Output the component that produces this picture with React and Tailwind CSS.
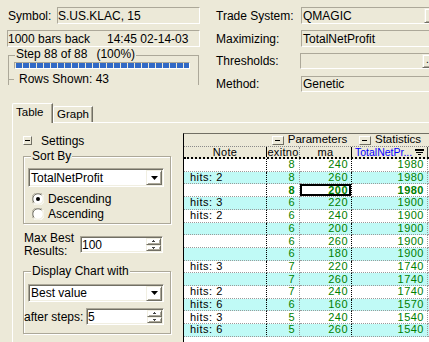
import React from "react";

const sunken1 =
  "border border-t-[#aca899] border-l-[#aca899] border-b-white border-r-white";
const sunken2 =
  "border border-t-[#aca899] border-l-[#aca899] border-b-white border-r-white shadow-[inset_1px_1px_0_#716f64,inset_-1px_-1px_0_#f1efe2]";
const raised =
  "border border-t-[#f1efe2] border-l-[#f1efe2] border-b-[#716f64] border-r-[#716f64] shadow-[inset_1px_1px_0_#ffffff,inset_-1px_-1px_0_#aca899]";

function Group({ label, className, labelClass, children }) {
  return (
    <div
      className={`border border-[#aca899] shadow-[inset_1px_1px_0_#ffffff,1px_1px_0_#ffffff] flex flex-col ${className}`}
    >
      <div
        className={`-mt-[8px] h-[14px] self-start px-[1px] bg-[#ece9d8] flex items-center ${labelClass}`}
      >
        {label}
      </div>
      {children}
    </div>
  );
}

function DownTri() {
  return (
    <svg width="7" height="4" viewBox="0 0 7 4">
      <path d="M0 0H7L3.5 4Z" fill="#000" />
    </svg>
  );
}

function Combo({ value, className }) {
  return (
    <div className={`${sunken2} bg-white flex items-center ${className}`}>
      <span className="flex-1 pl-[2px]">{value}</span>
      <div
        className={`${raised} w-[16px] h-[15px] mr-[1px] flex items-center justify-center`}
      >
        <DownTri />
      </div>
    </div>
  );
}

function Spin({ value, className }) {
  return (
    <div className={`${sunken2} bg-white h-[17px] flex ${className}`}>
      <span className="flex-1 pl-[1px] flex items-center">{value}</span>
      <div className="w-[16px] flex flex-col py-[1px] pr-[1px]">
        <div className={`${raised} flex-1 flex items-center justify-center`}>
          <svg width="3" height="2" viewBox="0 0 3 2">
            <path d="M1 0H2V1H3V2H0V1H1Z" fill="#444" />
          </svg>
        </div>
        <div className={`${raised} flex-1 flex items-center justify-center`}>
          <svg width="3" height="2" viewBox="0 0 3 2">
            <path d="M0 0H3V1H2V2H1V1H0Z" fill="#444" />
          </svg>
        </div>
      </div>
    </div>
  );
}

function Radio({ checked }) {
  return (
    <svg width="12" height="12" viewBox="0 0 12 12">
      <circle cx="6" cy="6" r="5.5" fill="#ffffff" />
      <path d="M1.5 10.5A6 6 0 0 1 10.5 1.5" stroke="#aca899" strokeWidth="1" fill="none" />
      <path d="M2.3 9.7A5 5 0 0 1 9.7 2.3" stroke="#716f64" strokeWidth="1" fill="none" />
      <path d="M10.5 1.5A6 6 0 0 1 1.5 10.5" stroke="#ffffff" strokeWidth="1" fill="none" />
      <path d="M9.7 2.3A5 5 0 0 1 2.3 9.7" stroke="#f1efe2" strokeWidth="1" fill="none" />
      {checked && <circle cx="6" cy="6" r="2" fill="#000" />}
    </svg>
  );
}

function TopRow({ label, children, className = "" }) {
  return (
    <div className={`flex items-center ${className}`}>
      <span className="w-[85px] shrink-0">{label}</span>
      {children}
    </div>
  );
}

const rows = [
  ["", 8, 240, 1980],
  ["hits: 2", 8, 260, 1980],
  ["", 8, 200, 1980, true],
  ["hits: 3", 6, 220, 1900],
  ["hits: 2", 6, 240, 1900],
  ["", 6, 200, 1900],
  ["", 6, 260, 1900],
  ["", 6, 180, 1900],
  ["hits: 3", 7, 220, 1740],
  ["", 7, 260, 1740],
  ["hits: 2", 7, 240, 1740],
  ["hits: 6", 6, 160, 1570],
  ["hits: 3", 5, 240, 1540],
  ["hits: 6", 5, 260, 1540],
];

export default function App() {
  const blocks = Array.from({ length: 25 });
  return (
    <div className="w-[429px] h-[342px] overflow-hidden bg-[#ece9d8] text-[12px] leading-none text-black font-['Liberation_Sans',Arial,sans-serif] flex flex-col">
      {/* top area */}
      <div className="h-[103px] flex pt-[7px] shrink-0">
        <div className="ml-[7px] w-[193px] shrink-0 flex flex-col">
          <div className="flex items-center h-[17px]">
            <span className="ml-[1px] w-[49px]">Symbol:</span>
            <div className={`${sunken1} w-[143px] h-[17px] flex items-center`}>
              S.US.KLAC, 15
            </div>
          </div>
          <div className={`${sunken1} mt-[6px] w-[193px] h-[17px] flex items-center`}>
            <span className="w-[99px]">1000 bars back</span>
            <span>14:45 02-14-03</span>
          </div>
          <div className="mt-[8px] ml-[1px] w-[191px] h-[30px] border border-b-0 border-[#aca899] flex flex-col">
            <div className="-mt-[8px] ml-[6px] h-[14px] self-start px-[1px] bg-[#ece9d8] flex items-center">
              <span>Step 88 of 88</span>
              <span className="ml-[9px]">(100%)</span>
            </div>
            <div
              className={`mt-[2px] ml-[5px] w-[176px] h-[10px] ${sunken1} flex items-center gap-[1px] pl-[1px] overflow-hidden`}
            >
              {blocks.map((_, i) => (
                <div key={i} className="w-[6px] h-[6px] shrink-0 bg-[#3169c6]" />
              ))}
            </div>
            <div className="mt-[4px] -ml-[1px] h-[13px] flex items-center">
              <div className="w-[6px] h-[1px] bg-[#aca899]" />
              <span className="ml-[5px] bg-[#ece9d8]">Rows Shown: 43</span>
            </div>
          </div>
        </div>
        <div className="ml-[16px] flex-1 flex flex-col">
          <TopRow label="Trade System:" className="h-[17px]">
            <div className={`${sunken1} h-[17px] w-[140px] shrink-0 flex items-center`}>
              <span className="w-[122px] pl-[1px] shrink-0">QMAGIC</span>
              <div className={`${raised} w-[14px] h-[15px] shrink-0`} />
            </div>
          </TopRow>
          <TopRow label="Maximizing:" className="h-[17px] mt-[6px]">
            <div className={`${sunken1} h-[17px] w-[140px] shrink-0 flex items-center pl-[1px]`}>
              TotalNetProfit
            </div>
          </TopRow>
          <TopRow label="Thresholds:" className="h-[16px] mt-[6px]">
            <div className={`${sunken1} -ml-[1px] h-[16px] w-[140px] shrink-0 flex items-center`}>
              <span className="w-[121px] shrink-0" />
              <div className={`${raised} w-[14px] h-[14px] shrink-0 flex items-end pl-[3px] pb-[2px] text-[10px]`}>
                .
              </div>
            </div>
          </TopRow>
          <TopRow label="Method:" className="h-[16px] mt-[7px]">
            <div className={`${sunken1} h-[16px] w-[140px] shrink-0 flex items-center pl-[1px]`}>
              Genetic
            </div>
          </TopRow>
        </div>
      </div>

      {/* tabs */}
      <div className="flex h-[19px] pl-[12px] items-end shrink-0 text-[11.5px]">
        <div className="relative z-10 -mb-[1px] h-[20px] w-[41px] bg-[#ece9d8] border-l border-t border-white border-r border-r-[#716f64] rounded-tl-[2px] shadow-[inset_-1px_0_0_#aca899] flex items-center pl-[3px] pb-[2px]">
          Table
        </div>
        <div className="h-[16px] w-[40px] border-l border-t border-white border-r border-r-[#716f64] rounded-tl-[2px] shadow-[inset_-1px_0_0_#aca899] flex items-center pl-[3px]">
          Graph
        </div>
      </div>

      {/* panel */}
      <div className="flex-1 ml-[12px] border-t border-l border-white flex min-h-0">
        <div className="ml-[10px] w-[148px] shrink-0 flex flex-col">
          <div className="mt-[13px] h-[9px] flex items-center">
            <div className="w-[9px] h-[9px] border border-t-white border-l-white border-b-[#716f64] border-r-[#716f64] flex items-center justify-center">
              <div className="w-[5px] h-[1px] bg-black" />
            </div>
            <span className="ml-[9px]">Settings</span>
          </div>

          <Group label="Sort By" className="mt-[11px] h-[68px]" labelClass="ml-[7px]">
            <Combo value="TotalNetProfit" className="mt-[5px] ml-[4px] w-[136px] h-[19px]" />
            <div className="mt-[5px] ml-[8px] h-[13px] flex items-center">
              <Radio checked />
              <span className="ml-[4px]">Descending</span>
            </div>
            <div className="mt-[2px] ml-[8px] h-[13px] flex items-center">
              <Radio />
              <span className="ml-[4px]">Ascending</span>
            </div>
          </Group>

          <div className="mt-[8px] flex">
            <div className="ml-[1px] w-[56px] leading-[13px]">
              Max Best
              <br />
              Results:
            </div>
            <Spin value="100" className="mt-[4px] w-[83px]" />
          </div>

          <Group label="Display Chart with" className="mt-[13px] h-[63px]" labelClass="ml-[7px]">
            <Combo value="Best value" className="mt-[6px] ml-[4px] w-[136px] h-[18px]" />
            <div className="mt-[6px] flex items-center">
              <span className="w-[62px]">after steps:</span>
              <Spin value="5" className="w-[78px]" />
            </div>
          </Group>
        </div>

        {/* grid */}
        <div className="ml-[12px] mt-[10px] flex-1 min-w-0 border-l border-black border-t border-t-[#716f64] bg-white flex flex-col overflow-hidden">
          <div className="h-[12px] shrink-0 bg-[#ece9d8] flex text-[11.5px]">
            <div className="w-[83px] shrink-0" />
            <div className="w-[85px] shrink-0 flex items-center justify-center">
              <div className="w-[12px] h-[9px] border border-t-white border-l-white border-b-[#716f64] border-r-[#716f64] flex items-center justify-center">
                <div className="w-[5px] h-[1px] bg-black" />
              </div>
              <span className="ml-[4px]">Parameters</span>
            </div>
            <div className="w-[76px] shrink-0 flex items-center justify-center">
              <div className="w-[12px] h-[9px] border border-t-white border-l-white border-b-[#716f64] border-r-[#716f64] flex items-center justify-center">
                <div className="w-[5px] h-[1px] bg-black" />
              </div>
              <span className="ml-[4px]">Statistics</span>
            </div>
          </div>
          <div className="h-[13px] shrink-0 bg-[#ece9d8] border-t border-dotted border-t-[#8a8a8a] border-b-2 border-b-black border-b-solid flex text-[11px] tracking-[0.3px]">
            <div className="w-[83px] shrink-0 border-r border-black flex items-center justify-center">
              Note
            </div>
            <div className="w-[33px] shrink-0 border-r border-dotted border-[#8a8a8a] flex items-center justify-center">
              exitno
            </div>
            <div className="w-[52px] shrink-0 border-r border-black flex items-center justify-center">
              ma
            </div>
            <div className="w-[76px] shrink-0 border-r border-[#404040] flex items-center pl-[3px] text-[#0000ff] text-[10.5px] tracking-[0px]">
              <span className="flex-1">TotalNetPr...</span>
              <svg width="10" height="7" viewBox="0 0 10 7" className="mr-[2px]">
                <rect x="0" y="0" width="9" height="2" fill="#000" />
                <rect x="1" y="3" width="7" height="1" fill="#000" />
                <rect x="3" y="5" width="3" height="1" fill="#000" />
              </svg>
            </div>
          </div>
          {rows.map((r, i) => {
            const bg = i % 2 === 0 ? "bg-white" : "bg-[#c0faf6]";
            const b = r[4] ? "font-bold" : "";
            return (
              <div
                key={i}
                className={`h-[12.71px] shrink-0 flex text-[11px] tracking-[0.5px] ${bg}`}
              >
                <div className="w-[83px] shrink-0 border-r border-black border-b border-b-[#9a9a9a] border-dotted border-r-solid pl-[6px] flex items-center">
                  {r[0]}
                </div>
                <div className={`w-[33px] shrink-0 border-r border-b border-dotted border-[#9a9a9a] pr-[4px] flex items-center justify-end text-[#008000] ${b}`}>
                  {r[1]}
                </div>
                <div
                  className={`w-[52px] shrink-0 border-r border-black border-b border-b-[#9a9a9a] border-dotted border-r-solid pr-[3px] flex items-center justify-end text-[#008000] ${b} ${
                    r[4] ? "shadow-[inset_0_0_0_2px_#000]" : ""
                  }`}
                >
                  {r[2]}
                </div>
                <div className={`w-[76px] shrink-0 border-r border-b border-dotted border-[#9a9a9a] pr-[3px] flex items-center justify-end text-[#008000] ${b}`}>
                  {r[3]}
                </div>
                <div className="flex-1 border-b border-dotted border-[#9a9a9a]" />
              </div>
            );
          })}
        </div>
      </div>
    </div>
  );
}
